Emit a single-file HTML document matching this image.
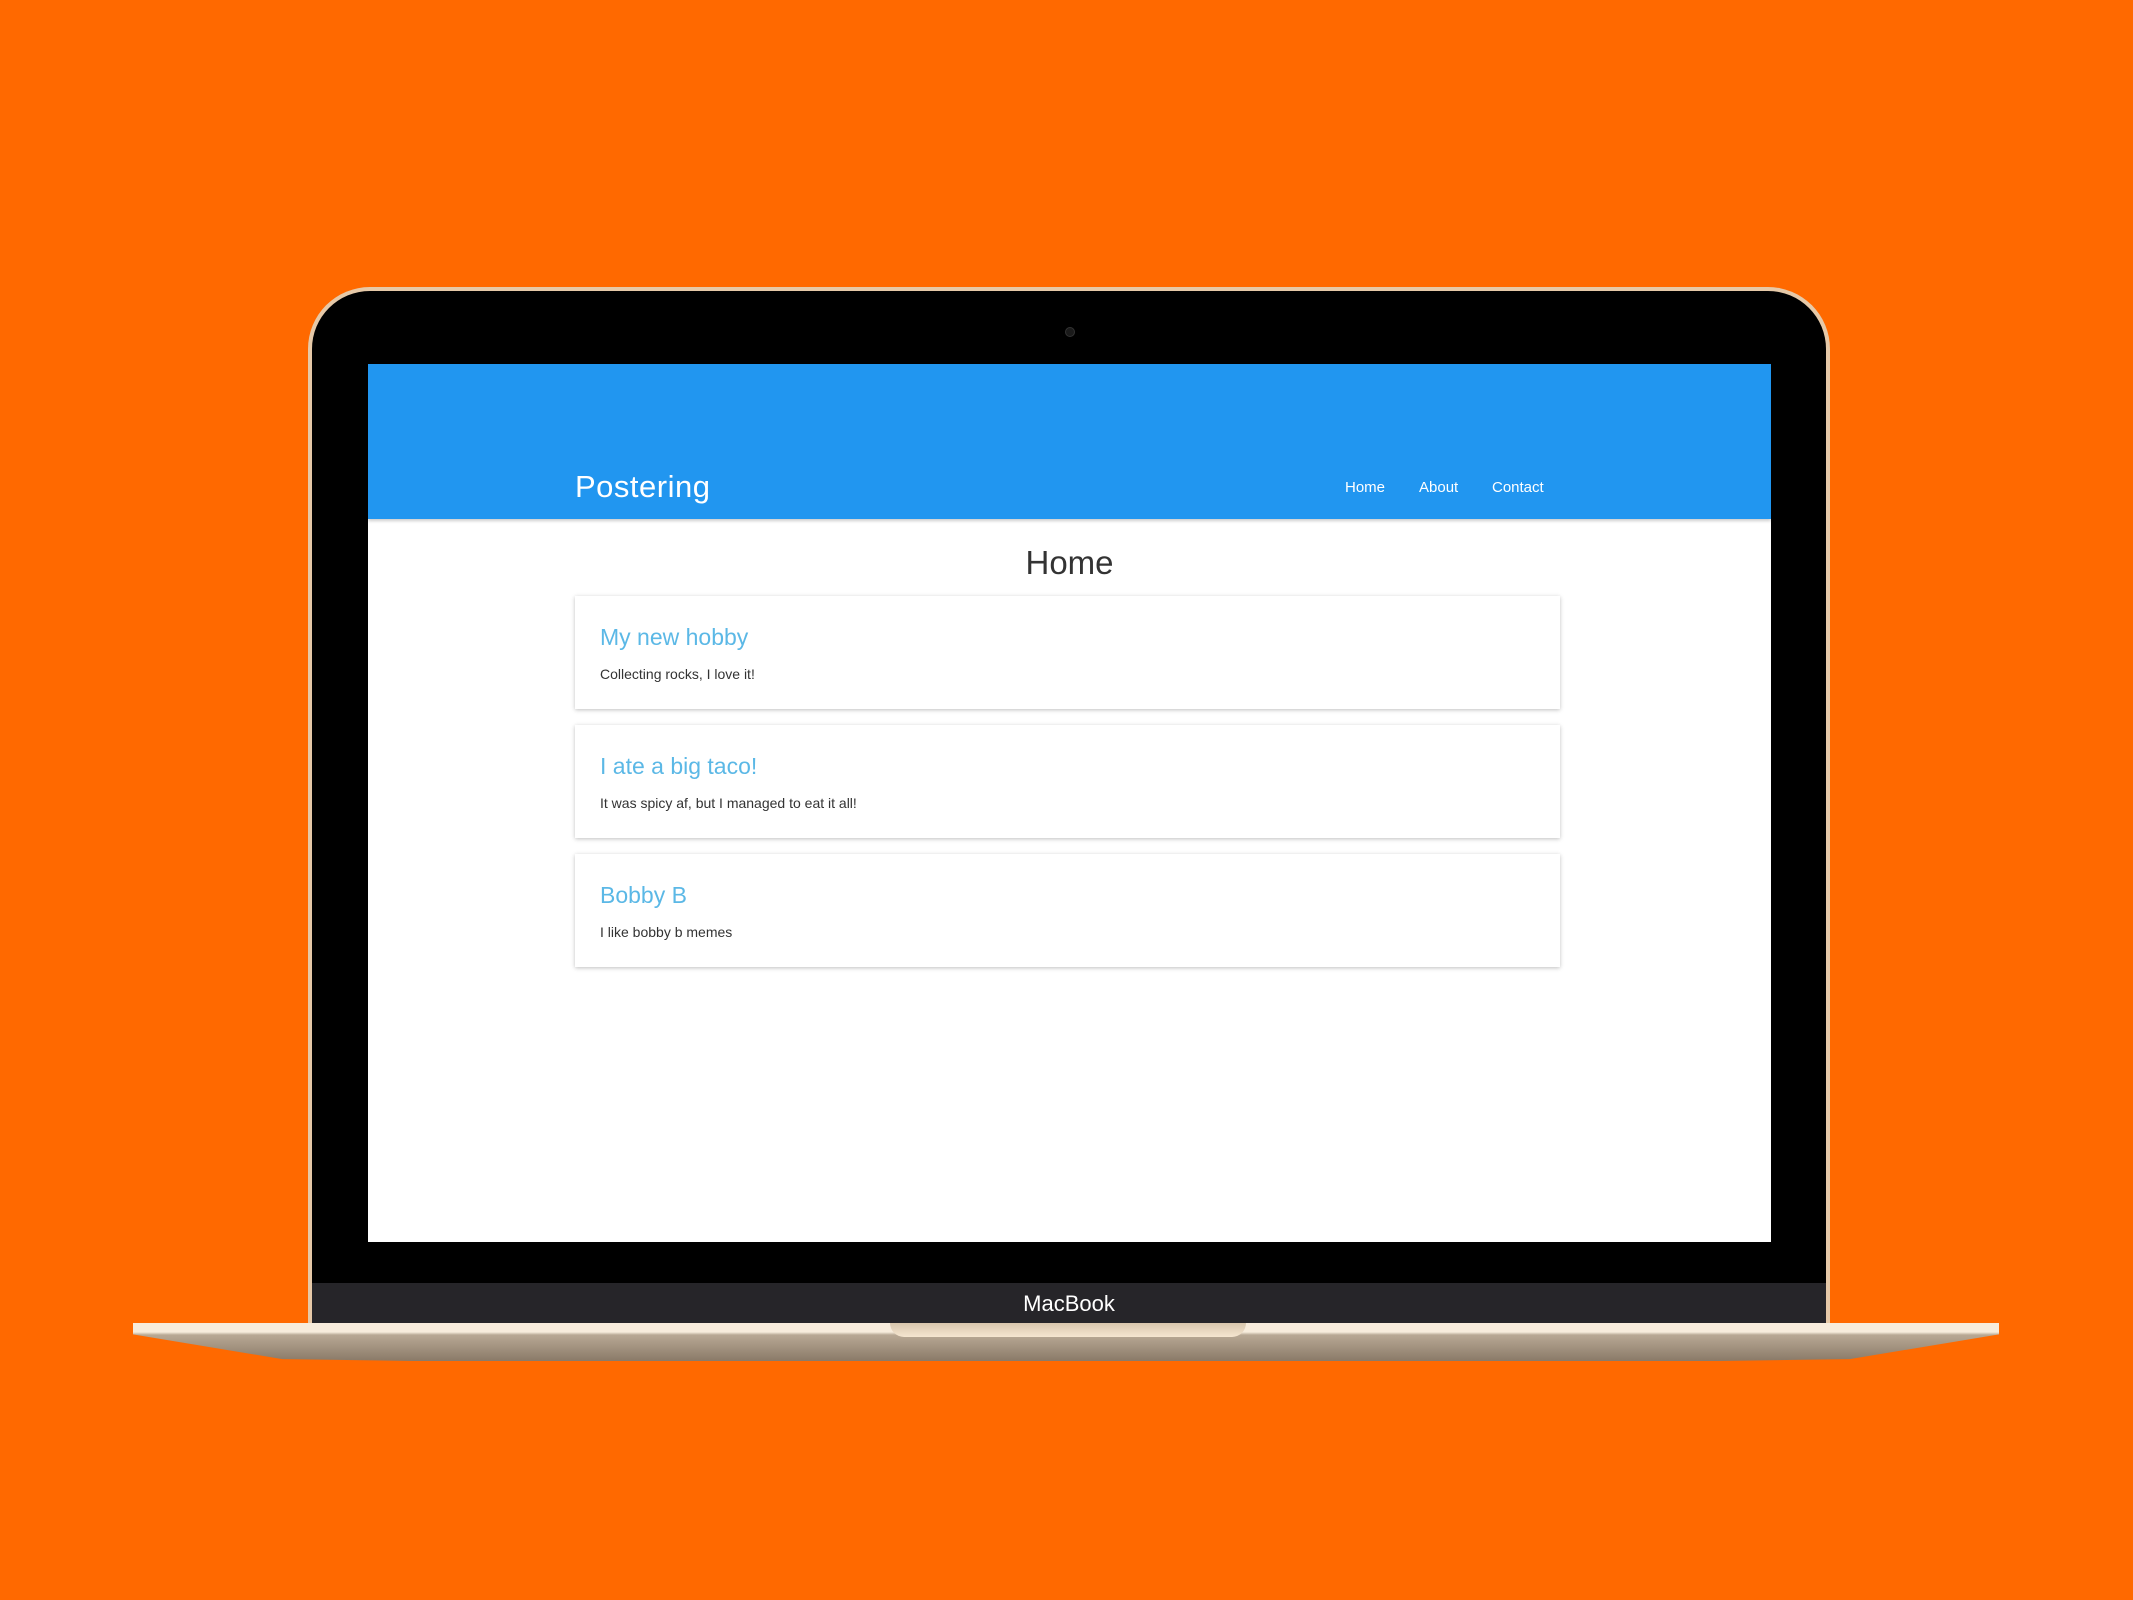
<!DOCTYPE html>
<html><head><style>
html,body{margin:0;padding:0}
body{width:2133px;height:1600px;background:#ff6900;position:relative;overflow:hidden;font-family:"Liberation Sans",sans-serif}
.lid{position:absolute;left:308px;top:287px;width:1522px;height:1050px;background:#000;border:4px solid #e6c9a8;border-radius:62px 62px 0 0;box-sizing:border-box;border-bottom:none;overflow:hidden}
.bar{position:absolute;left:0;right:0;top:992px;height:60px;background:#262529;color:#fff;text-align:center;font-size:22px;line-height:42px}
.cam{position:absolute;left:1065px;top:327px;width:8px;height:8px;border-radius:50%;background:#1a1a1a;border:1px solid #333}
.screen{position:absolute;left:368px;top:364px;width:1403px;height:878px;background:#fff;overflow:hidden}
.hdr{position:absolute;left:0;top:0;width:100%;height:155px;background:#2196f0;box-shadow:0 2px 3px rgba(0,0,0,.2)}
.logo{position:absolute;left:207px;top:105px;color:#fff;font-size:31px;letter-spacing:.5px}
.nav{position:absolute;top:115px;color:#fff;font-size:15px}
h1{position:absolute;left:0;right:0;top:180px;margin:0;text-align:center;font-weight:normal;font-size:33px;color:#333}
.card{position:absolute;left:207px;width:985px;height:113px;background:#fff;box-shadow:0 1px 4px rgba(0,0,0,.25)}
.card .t{position:absolute;left:25px;top:28px;font-size:23px;color:#5bb8e6}
.card .b{position:absolute;left:25px;top:70px;font-size:14px;color:#333}
.base{position:absolute;left:133px;top:1323px;width:1866px;height:38px;background:linear-gradient(#f7ecdc 0,#f7ecdc 9px,#b8a894 12px,#8a7a68 100%);clip-path:polygon(0 0,100% 0,100% 30%,92% 95%,85% 100%,15% 100%,8% 95%,0 30%)}
.notch{position:absolute;left:890px;top:1323px;width:356px;height:14px;background:linear-gradient(#d8c6ad,#f5e6d0);border-radius:0 0 14px 14px}
</style></head><body>
<div class="lid"><div class="bar">MacBook</div></div>
<div class="cam"></div>
<div class="screen">
 <div class="hdr">
  <div class="logo">Postering</div>
  <div class="nav" style="left:977px">Home</div>
  <div class="nav" style="left:1051px">About</div>
  <div class="nav" style="left:1124px">Contact</div>
 </div>
 <h1>Home</h1>
 <div class="card" style="top:232px"><div class="t">My new hobby</div><div class="b">Collecting rocks, I love it!</div></div>
 <div class="card" style="top:361px"><div class="t">I ate a big taco!</div><div class="b">It was spicy af, but I managed to eat it all!</div></div>
 <div class="card" style="top:490px"><div class="t">Bobby B</div><div class="b">I like bobby b memes</div></div>
</div>
<div class="base"></div>
<div class="notch"></div>
</body></html>
